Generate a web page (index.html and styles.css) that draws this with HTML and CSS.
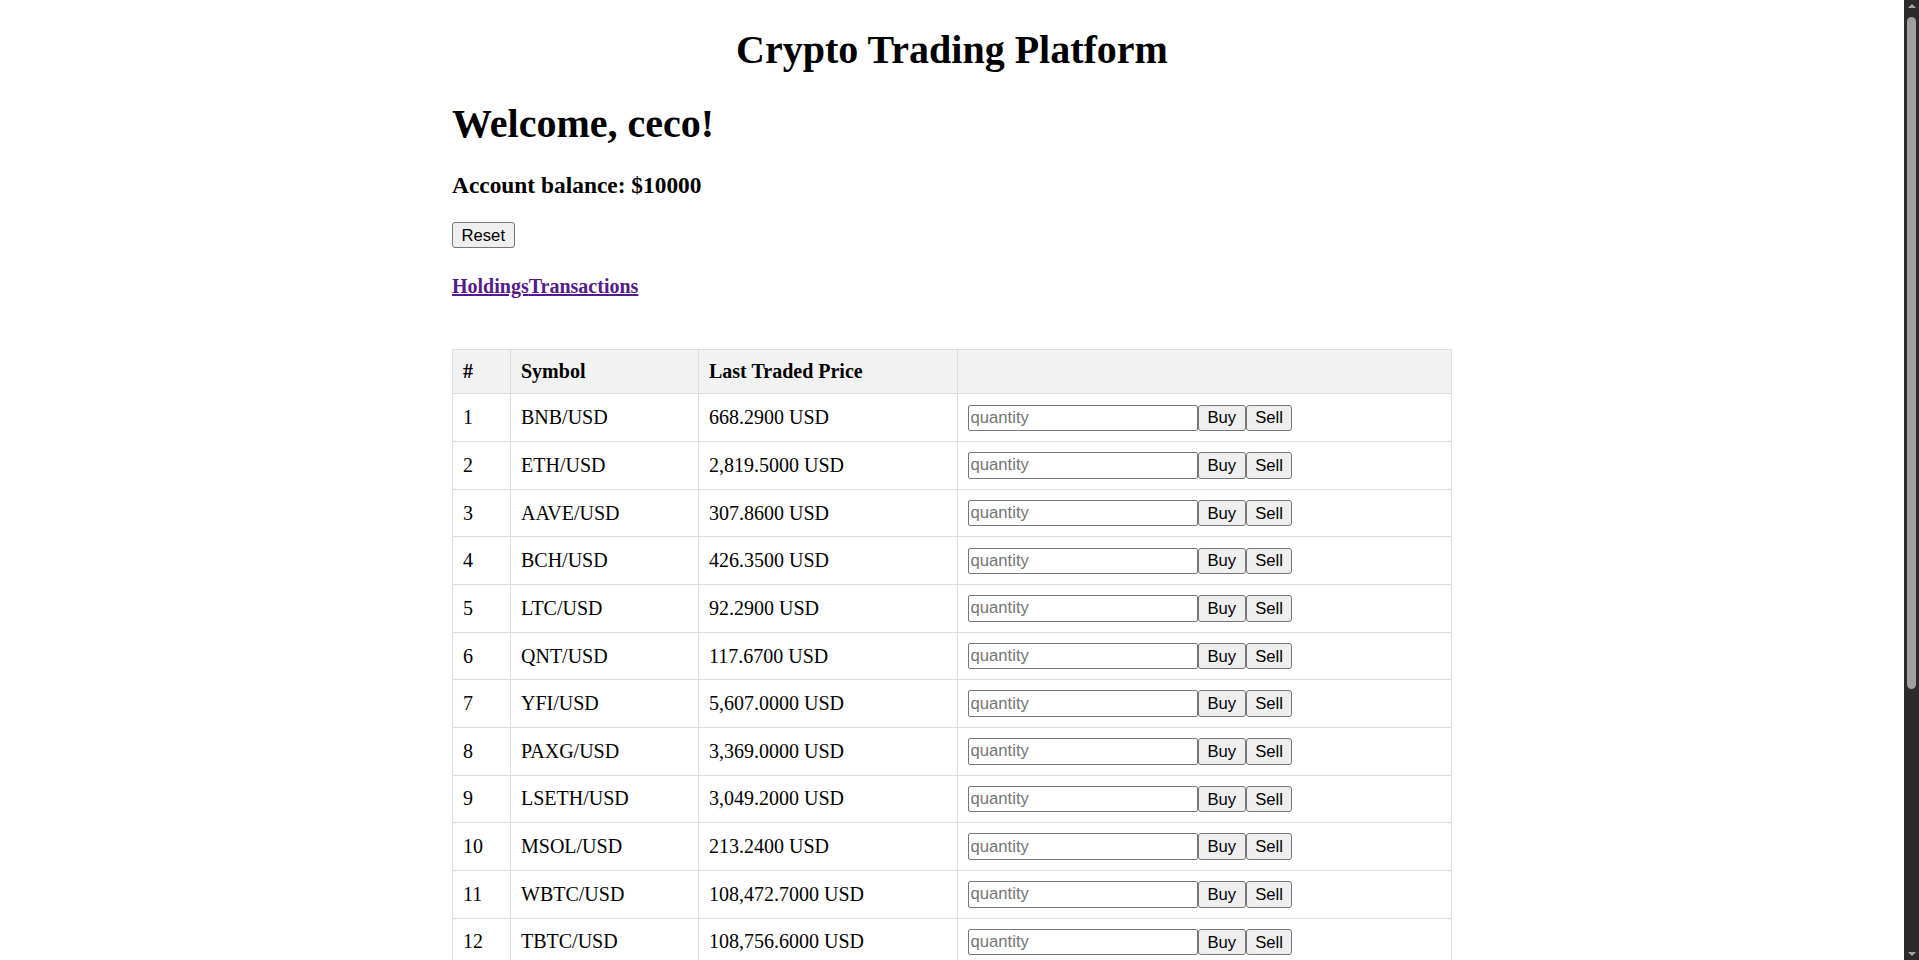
FILE: index.html
```html
<!DOCTYPE html>
<html lang="en">
<head>
<meta charset="utf-8">
<title>Crypto Trading Platform</title>
<link rel="stylesheet" href="styles.css">
</head>
<body>
<div class="page">
  <h1 class="title">Crypto Trading Platform</h1>
  <h2 class="welcome">Welcome, ceco!</h2>
  <h3 class="balance">Account balance: $10000</h3>
  <div class="actions"><button class="btn" type="button">Reset</button></div>
  <nav class="links"><a href="#" class="link">Holdings</a><a href="#" class="link">Transactions</a></nav>
  <table class="market">
    <colgroup>
      <col class="col-num">
      <col class="col-sym">
      <col class="col-price">
      <col class="col-act">
    </colgroup>
    <thead>
      <tr><th>#</th><th>Symbol</th><th>Last Traded Price</th><th></th></tr>
    </thead>
    <tbody>
      <tr><td>1</td><td>BNB/USD</td><td>668.2900 USD</td><td><input class="qty" placeholder="quantity"><button class="btn" type="button">Buy</button><button class="btn" type="button">Sell</button></td></tr>
      <tr><td>2</td><td>ETH/USD</td><td>2,819.5000 USD</td><td><input class="qty" placeholder="quantity"><button class="btn" type="button">Buy</button><button class="btn" type="button">Sell</button></td></tr>
      <tr><td>3</td><td>AAVE/USD</td><td>307.8600 USD</td><td><input class="qty" placeholder="quantity"><button class="btn" type="button">Buy</button><button class="btn" type="button">Sell</button></td></tr>
      <tr><td>4</td><td>BCH/USD</td><td>426.3500 USD</td><td><input class="qty" placeholder="quantity"><button class="btn" type="button">Buy</button><button class="btn" type="button">Sell</button></td></tr>
      <tr><td>5</td><td>LTC/USD</td><td>92.2900 USD</td><td><input class="qty" placeholder="quantity"><button class="btn" type="button">Buy</button><button class="btn" type="button">Sell</button></td></tr>
      <tr><td>6</td><td>QNT/USD</td><td>117.6700 USD</td><td><input class="qty" placeholder="quantity"><button class="btn" type="button">Buy</button><button class="btn" type="button">Sell</button></td></tr>
      <tr><td>7</td><td>YFI/USD</td><td>5,607.0000 USD</td><td><input class="qty" placeholder="quantity"><button class="btn" type="button">Buy</button><button class="btn" type="button">Sell</button></td></tr>
      <tr><td>8</td><td>PAXG/USD</td><td>3,369.0000 USD</td><td><input class="qty" placeholder="quantity"><button class="btn" type="button">Buy</button><button class="btn" type="button">Sell</button></td></tr>
      <tr><td>9</td><td>LSETH/USD</td><td>3,049.2000 USD</td><td><input class="qty" placeholder="quantity"><button class="btn" type="button">Buy</button><button class="btn" type="button">Sell</button></td></tr>
      <tr><td>10</td><td>MSOL/USD</td><td>213.2400 USD</td><td><input class="qty" placeholder="quantity"><button class="btn" type="button">Buy</button><button class="btn" type="button">Sell</button></td></tr>
      <tr><td>11</td><td>WBTC/USD</td><td>108,472.7000 USD</td><td><input class="qty" placeholder="quantity"><button class="btn" type="button">Buy</button><button class="btn" type="button">Sell</button></td></tr>
      <tr><td>12</td><td>TBTC/USD</td><td>108,756.6000 USD</td><td><input class="qty" placeholder="quantity"><button class="btn" type="button">Buy</button><button class="btn" type="button">Sell</button></td></tr>
    </tbody>
  </table>
</div>
<div class="scrollbar" aria-hidden="true">
  <span class="sb-arrow sb-up"></span>
  <span class="sb-thumb"></span>
  <span class="sb-arrow sb-down"></span>
</div>
</body>
</html>
```

FILE: styles.css
```css
html {
  background: #ffffff;
}

body {
  margin: 0;
  padding-right: 15px;
  font-family: "Liberation Serif", "Times New Roman", serif;
  font-size: 20px;
  line-height: 23px;
  color: #000;
}

.page {
  max-width: 1000px;
  margin: 0 auto;
  padding: 26.5px 0 0;
}

.title {
  margin: 0;
  font-size: 40px;
  line-height: 46px;
  font-weight: bold;
  text-align: center;
}

.welcome {
  margin: 28px 0 0;
  font-size: 40px;
  line-height: 46px;
  font-weight: bold;
}

.balance {
  margin: 25px 0 0;
  font-size: 23.4px;
  line-height: 27px;
  font-weight: bold;
}

.actions {
  margin-top: 23.4px;
  line-height: 0;
}

.links {
  margin-top: 27px;
  font-weight: bold;
  line-height: 23px;
}

.link {
  color: #551a8b;
  text-decoration: underline;
}

.btn {
  box-sizing: border-box;
  height: 26.5px;
  margin: 0;
  padding: 0 8.5px;
  font-family: "Liberation Sans", Arial, sans-serif;
  font-size: 16.67px;
  line-height: 19px;
  color: #000;
  background: #efefef;
  border: 1px solid #767676;
  border-radius: 3px;
  vertical-align: middle;
}

.qty {
  box-sizing: border-box;
  width: 230px;
  height: 26.5px;
  margin: 0;
  padding: 0 1.5px;
  font-family: "Liberation Sans", Arial, sans-serif;
  font-size: 16.67px;
  color: #000;
  background: #fff;
  border: 1px solid #767676;
  border-radius: 2px;
  vertical-align: middle;
}

.qty::placeholder {
  color: #757575;
}

.market {
  width: 1000px;
  margin-top: 51px;
  border-collapse: collapse;
  table-layout: fixed;
}

.col-num { width: 58px; }
.col-sym { width: 188px; }
.col-price { width: 259px; }

.market th,
.market td {
  padding: 10px;
  border: 1px solid #dddddd;
  text-align: left;
  vertical-align: middle;
}

.market th {
  background: #f2f2f2;
  font-weight: bold;
  height: 23px;
}

.market td {
  height: 26.4px;
  white-space: nowrap;
}

/* window scrollbar, drawn over the right edge */
.scrollbar {
  position: fixed;
  top: 0;
  right: 0;
  width: 15px;
  height: 100vh;
  background: #2b2b2b;
  display: flex;
  flex-direction: column;
  align-items: center;
}

.sb-arrow {
  width: 0;
  height: 0;
  border-left: 4px solid transparent;
  border-right: 4px solid transparent;
}

.sb-up {
  margin-top: 4px;
  border-bottom: 4px solid #a3a3a3;
}

.sb-thumb {
  width: 9px;
  height: 672px;
  margin-top: 9px;
  background: #9f9f9f;
  border-radius: 5px;
}

.sb-down {
  margin-top: auto;
  margin-bottom: 4px;
  border-top: 4px solid #a3a3a3;
}
```
